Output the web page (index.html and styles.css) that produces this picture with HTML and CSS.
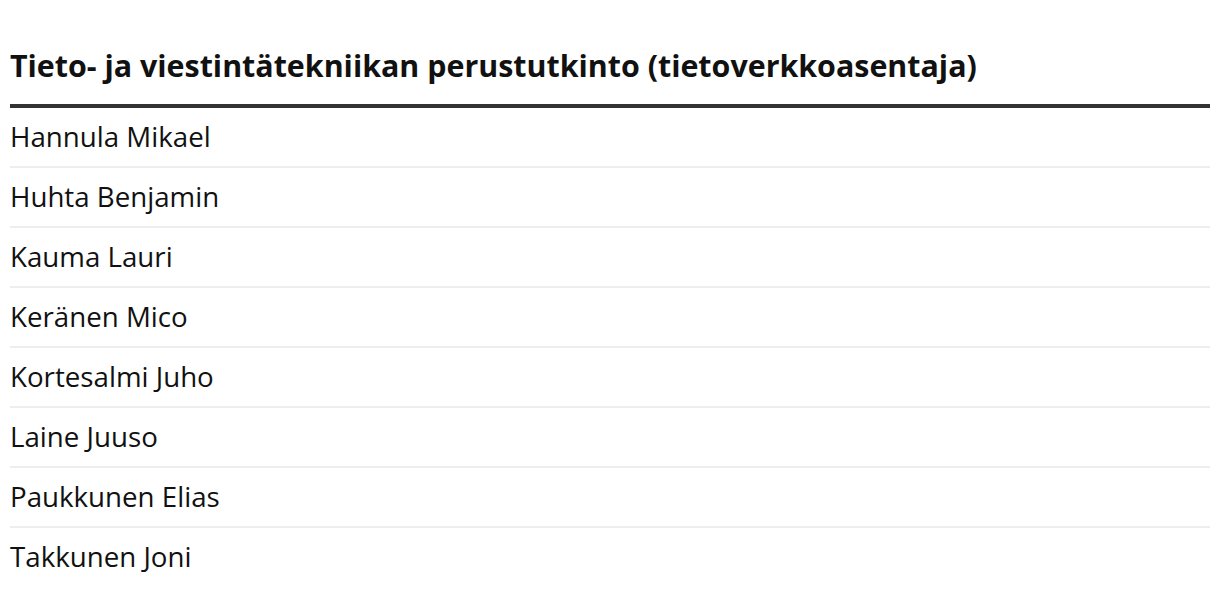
FILE: index.html
```html
<!DOCTYPE html>
<html lang="fi">
<head>
<meta charset="utf-8">
<link rel="stylesheet" href="styles.css">
</head>
<body>
<section class="group">
  <h2 class="group-title">Tieto- ja viestintätekniikan perustutkinto (tietoverkkoasentaja)</h2>
  <ul class="names">
    <li class="name">Hannula Mikael</li>
    <li class="name">Huhta Benjamin</li>
    <li class="name">Kauma Lauri</li>
    <li class="name">Keränen Mico</li>
    <li class="name">Kortesalmi Juho</li>
    <li class="name">Laine Juuso</li>
    <li class="name">Paukkunen Elias</li>
    <li class="name">Takkunen Joni</li>
  </ul>
</section>
</body>
</html>
```

FILE: styles.css
```css
html, body {
  margin: 0;
  padding: 0;
  background: #fff;
}
body {
  font-family: "Open Sans", "Liberation Sans", sans-serif;
  color: #111;
  padding: 0 10px;
}
.group-title {
  margin: 0;
  padding: 45px 0 18px;
  font-size: 30.4px;
  line-height: 41px;
  font-weight: 700;
  color: #111;
  border-bottom: 4px solid #333;
}
.names {
  list-style: none;
  margin: 0;
  padding: 0;
}
.name {
  font-size: 27.7px;
  line-height: 30px;
  padding: 13px 0 15px;
  border-bottom: 2px solid #eee;
}
.name:last-child {
  border-bottom: none;
}
```
